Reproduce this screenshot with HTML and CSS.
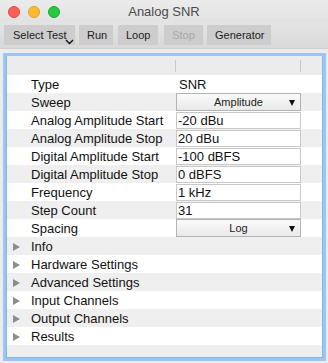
FILE: index.html
```html
<!DOCTYPE html>
<html lang="en">
<head>
  <meta charset="UTF-8">
  <title>Analog SNR</title>
  <link rel="stylesheet" href="styles.css">
</head>
<body>
  <div class="window">
    <div class="titlebar">
      <div class="lights">
        <span class="light red"></span>
        <span class="light yellow"></span>
        <span class="light green"></span>
      </div>
      <div class="title">Analog SNR</div>
      <div></div>
    </div>

    <div class="toolbar">
      <button class="tool select">Select Test
        <svg class="chev" width="9" height="6" viewBox="0 0 9 6"><path d="M1 1 L4.5 4.5 L8 1" fill="none" stroke="#111" stroke-width="1.4"/></svg>
      </button>
      <button class="tool run">Run</button>
      <button class="tool loop">Loop</button>
      <button class="tool stop" disabled>Stop</button>
      <button class="tool gen">Generator</button>
    </div>

    <div class="tree">
      <div class="head">
        <span class="hcol"></span>
        <span class="hcol"></span>
        <span class="hcol"></span>
      </div>

      <div class="row"><span class="label">Type</span><span class="text">SNR</span></div>
      <div class="row"><span class="label">Sweep</span><span class="combo">Amplitude<i class="arrow"></i></span></div>
      <div class="row"><span class="label">Analog Amplitude Start</span><span class="field">-20 dBu</span></div>
      <div class="row"><span class="label">Analog Amplitude Stop</span><span class="field">20 dBu</span></div>
      <div class="row"><span class="label">Digital Amplitude Start</span><span class="field">-100 dBFS</span></div>
      <div class="row"><span class="label">Digital Amplitude Stop</span><span class="field">0 dBFS</span></div>
      <div class="row"><span class="label">Frequency</span><span class="field">1 kHz</span></div>
      <div class="row"><span class="label">Step Count</span><span class="field">31</span></div>
      <div class="row"><span class="label">Spacing</span><span class="combo">Log<i class="arrow"></i></span></div>

      <div class="row group"><span class="label"><i class="disclose"></i>Info</span></div>
      <div class="row group"><span class="label"><i class="disclose"></i>Hardware Settings</span></div>
      <div class="row group"><span class="label"><i class="disclose"></i>Advanced Settings</span></div>
      <div class="row group"><span class="label"><i class="disclose"></i>Input Channels</span></div>
      <div class="row group"><span class="label"><i class="disclose"></i>Output Channels</span></div>
      <div class="row group"><span class="label"><i class="disclose"></i>Results</span></div>

      <div class="filler"></div>
    </div>
  </div>
</body>
</html>
```

FILE: styles.css
```css
body {
  margin: 0;
  font-family: 'Liberation Sans', Arial, sans-serif;
  background: #ececec;
}
.window {
  width: 328px;
  height: 363px;
  display: flex;
  flex-direction: column;
  background: #ececec;
  overflow: hidden;
}
.titlebar {
  height: 22px;
  display: grid;
  grid-template-columns: 1fr auto 1fr;
  align-items: center;
  background: linear-gradient(#ebebeb, #e2e2e2);
}
.lights {
  display: flex;
  gap: 8px;
  padding-left: 8px;
  padding-top: 1px;
}
.light {
  width: 12px;
  height: 12px;
  border-radius: 50%;
  box-sizing: border-box;
}
.red { background: #fc5f57; border: 1px solid #df4a43; }
.yellow { background: #fdbc2e; border: 1px solid #dea123; }
.green { background: #28c840; border: 1px solid #1daa2c; }
.title {
  font-size: 13px;
  color: #4b4b4b;
  padding-top: 1px;
}
.toolbar {
  display: flex;
  gap: 4px;
  padding: 3px 4px;
  background: linear-gradient(#e4e4e4, #d9d9d9);
  border-bottom: 1px solid #cfcfcf;
}
.tool {
  position: relative;
  height: 20px;
  padding: 0 8px;
  border: none;
  border-radius: 1px;
  background: #cdcdcd;
  font-family: 'Liberation Sans', Arial, sans-serif;
  font-size: 11px;
  color: #1b1b1b;
}
.tool.select { width: 71px; padding-left: 9px; text-align: left; }
.tool.run { width: 34px; }
.tool.loop { width: 40px; margin-left: 1px; }
.tool.stop { width: 39px; margin-left: 2px; color: #a8a8a8; }
.tool.gen { width: 64px; }
.chev {
  position: absolute;
  left: 61px;
  top: 14px;
}
.tree {
  margin: 4px 2px 2px 3px;
  flex: 1;
  border: 3px solid #9cc6f2;
  box-shadow: inset 0 0 0 1px #85b5e8;
  display: flex;
  flex-direction: column;
  background: #fff;
}
.head {
  height: 19px;
  display: grid;
  grid-template-columns: 169px 125px 1fr;
  background: #ececec;
  margin: 0 1px;
}
.hcol {
  border-right: 1px solid #c9c9c9;
  margin: 4px 0 3px;
}
.hcol:last-child { border-right: none; }
.row {
  height: 18px;
  display: grid;
  grid-template-columns: 169px 125px;
  align-items: center;
  font-size: 13px;
  color: #111;
  margin: 0 1px;
  background: #fff;
}
.row:nth-child(odd) { background: #efefef; }
.label {
  padding-left: 24px;
  white-space: nowrap;
  overflow: hidden;
  position: relative;
}
.text {
  padding-left: 3px;
}
.field {
  height: 17px;
  line-height: 16px;
  box-sizing: border-box;
  border: 1px solid #c8c8c8;
  background: #fff;
  padding-left: 1px;
  white-space: nowrap;
}
.combo {
  height: 18px;
  line-height: 16px;
  box-sizing: border-box;
  border: 1px solid #b3b3b3;
  background: linear-gradient(#fafafa, #e9e9e9);
  font-size: 11px;
  text-align: center;
  position: relative;
  color: #222;
}
.arrow {
  position: absolute;
  right: 5px;
  top: 6px;
  width: 0;
  height: 0;
  border-left: 3.5px solid transparent;
  border-right: 3.5px solid transparent;
  border-top: 6px solid #111;
}
.disclose {
  position: absolute;
  left: 6px;
  top: 4px;
  width: 0;
  height: 0;
  border-top: 4px solid transparent;
  border-bottom: 4px solid transparent;
  border-left: 7px solid #8c8c8c;
}
.filler {
  flex: 1;
  background: #efefef;
  margin: 0 1px 1px;
}
```
